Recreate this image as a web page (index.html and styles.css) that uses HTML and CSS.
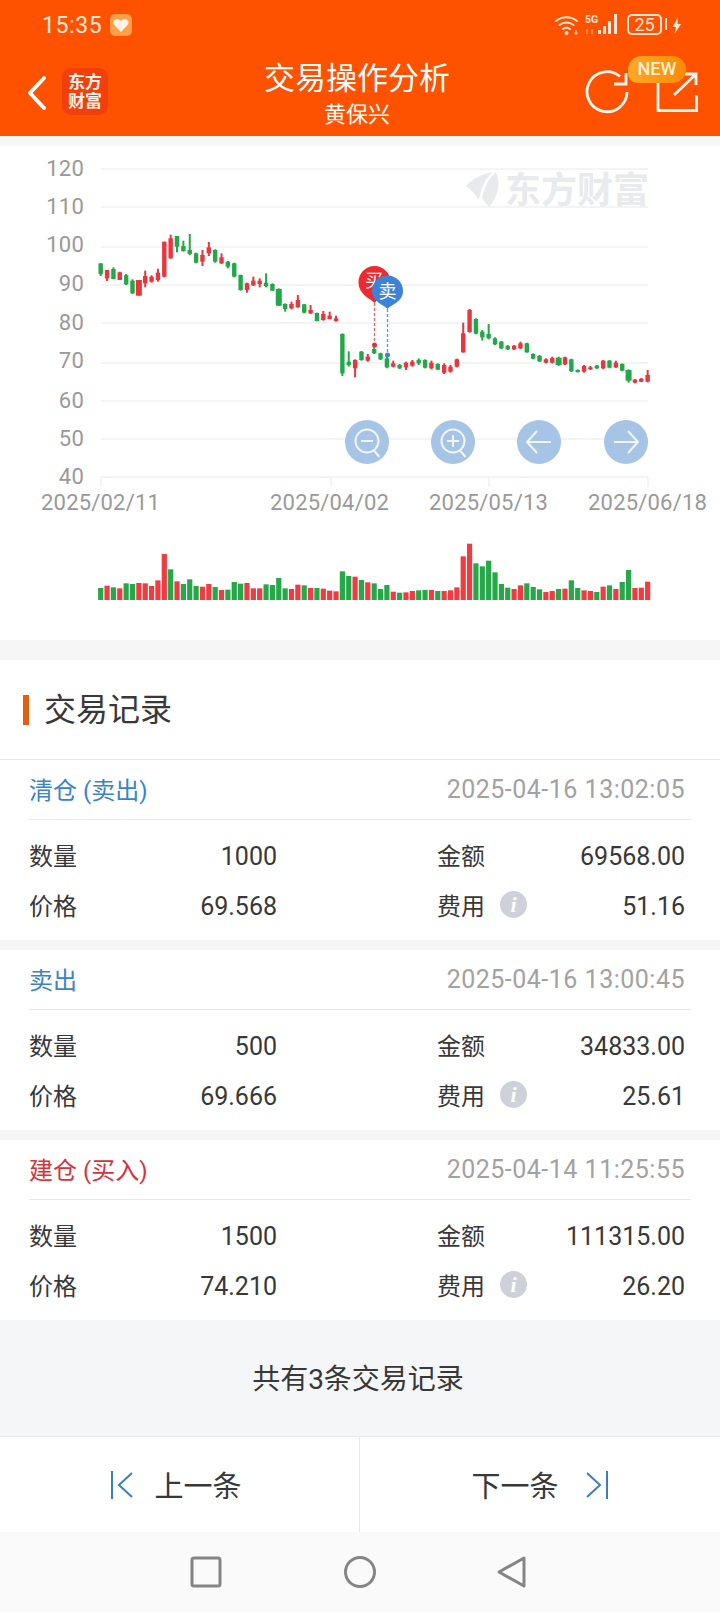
FILE: index.html
```html
<!DOCTYPE html>
<html lang="zh-CN">
  <head>
    <meta charset="UTF-8" />
    <meta name="viewport" content="width=device-width, initial-scale=1.0" />
    <title>交易操作分析</title>
    <link rel="stylesheet" href="styles.css">
  </head>
  <body>
    <header class="top">
      <div class="status">
        <span class="clock">15:35</span>
        <svg class="heart" viewBox="0 0 22 22">
          <rect width="22" height="22" rx="5" fill="#ff9f4a" />
          <path d="M11 18 4 10.500C2.500 7.500 4.500 5 7 5c1.800 0 3 .8 4 2 1-1.200 2.200-2 4-2 2.500 0 4.500 2.500 3 5.500z" fill="#fff4e8" />
        </svg>
        <svg class="status-icons" viewBox="550 10 135 30">
          <g fill="none" stroke="#ffe6d6" stroke-width="2" stroke-linecap="round">
            <path d="M556 21a17 17 0 0 1 21 0" />
            <path d="M559.500 25a11.500 11.500 0 0 1 14 0" />
            <path d="M563 29a6 6 0 0 1 7 0" />
          </g>
          <circle cx="566.500" cy="33" r="2" fill="#ffe6d6" />
          <path d="M574 33h4M576 30v5" stroke="#ffc7a8" stroke-width="1.200" />
          <text class="tiny" x="585" y="22.500">5G</text>
          <path d="M587 29v5M592 29v5" stroke="#ffa06a" stroke-width="1.500" />
          <g fill="#ffe6d6">
            <rect x="598" y="30" width="3" height="4" />
            <rect x="603" y="26" width="3" height="8" />
            <rect x="608" y="21" width="3" height="13" />
            <rect x="614" y="14" width="3" height="20" />
          </g>
          <rect x="628" y="15" width="33" height="19" rx="4" fill="none" stroke="#ffe6d6" stroke-width="2" />
          <text class="batt" x="644.500" y="31">25</text>
          <rect x="665" y="18" width="2" height="12" fill="#ffe6d6" />
          <path d="M678 17 672.500 27h3.500L674.500 34 681 24h-3.500z" fill="#ffe6d6" />
        </svg>
      </div>
      <div class="nav">
        <div class="nav-left">
          <svg class="back" viewBox="0 0 20 36">
            <path d="M17 3 3 18l14 15" fill="none" stroke="#fff" stroke-width="4" stroke-linecap="round" stroke-linejoin="round" />
          </svg>
          <div class="logo">东方<br />财富</div>
        </div>
        <div class="nav-title">
          <h1>交易操作分析</h1>
          <p>黄保兴</p>
        </div>
        <div class="nav-right">
          <svg class="nav-icons" viewBox="580 50 120 86">
            <g fill="none" stroke="#fff8f2" stroke-width="2.800">
              <path d="M627 92a20 20 0 1 1-7-15.500" />
              <path d="M614 84h12V73" />
              <path d="M658 80v30.500h38.500V95.500" />
              <path d="M674 95l22-21M685 74h11v11" />
            </g>
          </svg>
          <span class="badge">NEW</span>
        </div>
      </div>
    </header>

    <section class="chart">
      <svg class="chart-svg" viewBox="0 146 720 494">
        <g class="grid">
          <path d="M101 169H648M101 207H648M101 247H648M101 285H648M101 323H648M101 363H648M101 401H648M101 439H648M101 477H648" />
          <path d="M101 477v10M331 477v10M489 477v10M648 477v10" />
        </g>
        <g class="axis">
          <text x="84" y="176" text-anchor="end">120</text>
          <text x="84" y="214" text-anchor="end">110</text>
          <text x="84" y="252" text-anchor="end">100</text>
          <text x="84" y="291" text-anchor="end">90</text>
          <text x="84" y="330" text-anchor="end">80</text>
          <text x="84" y="368" text-anchor="end">70</text>
          <text x="84" y="408" text-anchor="end">60</text>
          <text x="84" y="446" text-anchor="end">50</text>
          <text x="84" y="484" text-anchor="end">40</text>
          <text x="41" y="510">2025/02/11</text>
          <text x="270" y="510">2025/04/02</text>
          <text x="429" y="510">2025/05/13</text>
          <text x="588" y="510">2025/06/18</text>
        </g>

        <path class="mark-logo" d="M466 186c6-7 16-12 27-14-7 6-12 15-14 28-3-5-7-10-13-14zM496 172c5 11 2 25-7 35-3-4-6-7-7-9 2-10 7-20 14-26z" />
        <text class="mark-text" x="505" y="203">东方财富</text>

        <g id="candles"></g>
        <g id="volume"></g>

        <path class="pin-line red" d="M374.500 303V345" />
        <circle cx="374.500" cy="345" r="2.500" fill="#e5323a" />
        <path class="pin-line blue" d="M387.500 309V355" />
        <circle cx="387.500" cy="355" r="2.500" fill="#3c82d8" />
        <path d="M374.500 303c-3-4-16-8-16-21a16 16 0 0 1 32 0c0 13-13 17-16 21z" fill="#ee2a2e" />
        <text class="pin-text" x="374" y="287">买</text>
        <path d="M387.500 309c-3-4-15.500-7-15.500-18a15.500 15.500 0 0 1 31 0c0 11-12.500 14-15.500 18z" fill="#3c82d8" />
        <text class="pin-text" x="387.500" y="298">卖</text>

        <g class="zoom-btn">
          <circle cx="367" cy="442" r="22" />
          <circle cx="453" cy="442" r="22" />
          <circle cx="539" cy="442" r="22" />
          <circle cx="626" cy="442" r="22" />
        </g>
        <g class="zoom-ico">
          <circle cx="367" cy="441" r="11.500" />
          <path d="M361 441h12M373.500 450l6 7" />
          <circle cx="453" cy="441" r="11.500" />
          <path d="M447 441h12M453 435v12M459.500 450l6 7" />
          <path d="M528 442h23M537 431l-10 11 10 11" />
          <path d="M614 442h23M628 431l10 11-10 11" />
        </g>
      </svg>
    </section>

    <section class="records">
      <h2 class="records-title"><span>交易记录</span></h2>

      <div class="card first">
        <div class="card-head">
          <span class="kind sell">清仓 (卖出)</span>
          <span class="date">2025-04-16 13:02:05</span>
        </div>
        <div class="card-body">
          <div class="cell"><span>数量</span><b>1000</b></div>
          <div class="cell"><span>金额</span><b>69568.00</b></div>
          <div class="cell"><span>价格</span><b>69.568</b></div>
          <div class="cell"><span>费用</span><i class="info">i</i><b>51.16</b></div>
        </div>
      </div>

      <div class="card">
        <div class="card-head">
          <span class="kind sell">卖出</span>
          <span class="date">2025-04-16 13:00:45</span>
        </div>
        <div class="card-body">
          <div class="cell"><span>数量</span><b>500</b></div>
          <div class="cell"><span>金额</span><b>34833.00</b></div>
          <div class="cell"><span>价格</span><b>69.666</b></div>
          <div class="cell"><span>费用</span><i class="info">i</i><b>25.61</b></div>
        </div>
      </div>

      <div class="card">
        <div class="card-head">
          <span class="kind buy">建仓 (买入)</span>
          <span class="date">2025-04-14 11:25:55</span>
        </div>
        <div class="card-body">
          <div class="cell"><span>数量</span><b>1500</b></div>
          <div class="cell"><span>金额</span><b>111315.00</b></div>
          <div class="cell"><span>价格</span><b>74.210</b></div>
          <div class="cell"><span>费用</span><i class="info">i</i><b>26.20</b></div>
        </div>
      </div>
    </section>

    <div class="total">共有3条交易记录</div>

    <div class="pager">
      <a class="page-btn prev">
        <svg class="page-ico" viewBox="0 0 24 30">
          <path d="M2 1v28M22 3 9 15l13 12" />
        </svg>
        <span>上一条</span>
      </a>
      <a class="page-btn next">
        <span>下一条</span>
        <svg class="page-ico" viewBox="0 0 24 30">
          <path d="M22 1v28M2 3l13 12L2 27" />
        </svg>
      </a>
    </div>

    <footer class="sysbar">
      <svg class="sys-ico square" viewBox="0 0 32 32"><rect x="2" y="2" width="28" height="28" rx="2" /></svg>
      <svg class="sys-ico" viewBox="0 0 32 32"><circle cx="16" cy="16" r="14.500" /></svg>
      <svg class="sys-ico" viewBox="0 0 32 32"><path d="M28 2 3 16l25 14z" /></svg>
    </footer>

    <script src="script.js"></script>
  </body>
</html>
```

FILE: styles.css
```css
* {
  box-sizing: border-box;
}

body {
  margin: 0;
  background-color: #f6f6f6;
  font-family: Roboto, "Noto Sans CJK SC", sans-serif;
  color: #383838;
}

.top {
  background-color: #ff5200;
  height: 136px;
  color: #fff;
}

.status {
  display: flex;
  align-items: center;
  height: 50px;
  padding-left: 42px;
}

.clock {
  font-size: 23px;
  letter-spacing: 0.6px;
  color: #ffe9dc;
  width: 68px;
}

.heart {
  width: 22px;
  height: 22px;
}

.status-icons {
  width: 135px;
  height: 30px;
  margin-left: auto;
  margin-right: 35px;
}

.tiny {
  font-size: 10.500px;
  font-weight: 700;
  fill: #ffe6d6;
}

.batt {
  font-size: 18px;
  fill: #ffe6d6;
  text-anchor: middle;
}

.nav {
  display: flex;
  height: 86px;
}

.nav-left {
  display: flex;
  align-items: center;
  gap: 15px;
  width: 217px;
  padding-left: 27px;
}

.back {
  width: 20px;
  height: 36px;
}

.logo {
  width: 46px;
  height: 47px;
  margin-top: -3px;
  padding-top: 5px;
  background-color: #f33f0c;
  border-radius: 9px;
  font-size: 17px;
  font-weight: 700;
  line-height: 19px;
  text-align: center;
  color: #fff2e8;
}

.nav-title {
  width: 280px;
  padding-top: 11px;
  text-align: center;
}

.nav-title h1 {
  margin: 0;
  font-size: 31px;
  font-weight: 400;
  line-height: 36px;
}

.nav-title p {
  margin: 5px 0 0;
  font-size: 22px;
  line-height: 26px;
}

.nav-right {
  position: relative;
  flex: 1;
}

.nav-icons {
  display: block;
  width: 120px;
  height: 86px;
  margin-left: auto;
  margin-right: 20px;
}

.badge {
  position: absolute;
  left: 131px;
  top: 6px;
  width: 58px;
  height: 27px;
  background: linear-gradient(to right, #ffa926, #ff8a05);
  border-radius: 14px 14px 14px 10px;
  font-size: 18px;
  font-weight: 500;
  line-height: 26px;
  text-align: center;
  color: #fff3d6;
}

.chart {
  margin-top: 10px;
  height: 494px;
  background-color: #fff;
}

.chart-svg {
  display: block;
  width: 720px;
  height: 494px;
}

.grid path {
  fill: none;
  stroke: #f4f4f5;
  stroke-width: 2;
}

.axis text {
  font-size: 22px;
  letter-spacing: 0.2px;
  fill: #999;
}

.mark-logo {
  fill: #e9eaee;
}

.mark-text {
  font-size: 36px;
  font-weight: 700;
  fill: #e9eaee;
}

.pin-line {
  fill: none;
  stroke-width: 1.300;
  stroke-dasharray: 3 2;
}

.pin-line.red {
  stroke: #e5606a;
}

.pin-line.blue {
  stroke: #5a94d8;
}

.pin-text {
  font-size: 18px;
  fill: #fff;
  text-anchor: middle;
}

.zoom-btn circle {
  fill: #a6c4e5;
}

.zoom-ico circle,
.zoom-ico path {
  fill: none;
  stroke: #f2f6fb;
  stroke-width: 2;
}

.records {
  margin-top: 20px;
  background-color: #f6f6f6;
}

.records-title {
  height: 99px;
  margin: 0;
  padding: 35px 0 0 23px;
  background-color: #fff;
  font-size: 32px;
  font-weight: 400;
  line-height: 30px;
}

.records-title span {
  display: block;
  padding-left: 15px;
  border-left: 6px solid #e0600f;
}

.card {
  margin-bottom: 10px;
  padding: 0 29px 9px 29px;
  background-color: #fff;
}

.card:last-child {
  margin-bottom: 0;
}

.card.first {
  border-top: 1px solid #e9e9e9;
}

.card-head {
  display: flex;
  align-items: center;
  justify-content: space-between;
  height: 60px;
  padding-right: 6px;
  border-bottom: 1px solid #e9e9e9;
}

.kind {
  margin-bottom: 2px;
  font-size: 24px;
}

.sell {
  color: #3b83c4;
}

.buy {
  color: #d4343c;
}

.date {
  font-size: 25px;
  letter-spacing: 0.5px;
  color: #a2a2a2;
}

.card-body {
  display: grid;
  grid-template-columns: 248px 248px;
  grid-auto-rows: 50px;
  justify-content: space-between;
  padding-top: 11px;
  padding-right: 6px;
}

.cell {
  display: flex;
  align-items: center;
  font-size: 24px;
}

.cell span {
  margin-bottom: 4px;
}

.cell b {
  margin-left: auto;
  font-size: 25px;
  font-weight: 400;
}

.info {
  width: 27px;
  height: 27px;
  margin: 0 0 3px 15px;
  border-radius: 50%;
  background-color: #cdd1d9;
  font-family: "Liberation Serif", serif;
  font-size: 22px;
  font-weight: 700;
  line-height: 27px;
  text-align: center;
  color: #fff;
}

.total {
  height: 117px;
  padding-right: 4px;
  border-bottom: 1px solid #e9e9e9;
  background-color: #f5f6f8;
  font-size: 28px;
  line-height: 120px;
  text-align: center;
}

.pager {
  display: grid;
  grid-template-columns: 1fr 1fr;
  height: 95px;
  background-color: #fff;
}

.page-btn {
  display: flex;
  align-items: center;
  justify-content: center;
  font-size: 29px;
}

.page-btn span {
  margin-bottom: 2px;
}

.prev {
  gap: 20px;
  padding-right: 7px;
  border-right: 1px solid #e9e9e9;
}

.next {
  gap: 26px;
}

.page-ico {
  width: 24px;
  height: 30px;
  fill: none;
  stroke: #3a7ebf;
  stroke-width: 2;
}

.sysbar {
  display: flex;
  justify-content: center;
  align-items: center;
  gap: 120px;
  height: 80px;
  background-color: #fafafa;
}

.sys-ico {
  width: 32px;
  height: 32px;
  fill: none;
  stroke: #858585;
  stroke-width: 3;
  stroke-linejoin: round;
}

.square {
  margin: 0 2.500px 0 -2.500px;
}
```

FILE: script.js
```js
const RED = "#e8363c";
const GREEN = "#22a848";
const START_X = 100.7;
const STEP_X = 6.36;

// y values below are measured at 3x from the top of the chart (page y 150)
const py = (v) => 150 + v / 3;

// colour, wick top, wick bottom, body top, body bottom
const candles = [
  ["g", 340, 378, 340, 372], ["r", 360, 393, 360, 385], ["g", 352, 388, 357, 387], ["r", 365, 390, 367, 390],
  ["g", 372, 405, 376, 403], ["g", 388, 432, 392, 430], ["r", 390, 437, 390, 437], ["r", 362, 412, 378, 400],
  ["r", 376, 398, 380, 395], ["r", 356, 395, 368, 390], ["r", 275, 382, 275, 380], ["r", 254, 326, 265, 325],
  ["g", 258, 307, 258, 290], ["g", 272, 305, 288, 303], ["g", 252, 315, 300, 312], ["g", 308, 340, 310, 338],
  ["r", 300, 348, 315, 335], ["r", 276, 318, 292, 310], ["g", 298, 338, 300, 335], ["r", 310, 342, 322, 340],
  ["g", 333, 355, 335, 350], ["g", 338, 382, 340, 380], ["g", 374, 422, 375, 420], ["r", 398, 428, 400, 420],
  ["r", 380, 408, 392, 406], ["r", 385, 412, 392, 402], ["g", 370, 412, 398, 408], ["g", 400, 423, 402, 422],
  ["g", 415, 468, 417, 467], ["g", 460, 485, 462, 477], ["r", 455, 478, 462, 475], ["r", 435, 473, 450, 472],
  ["g", 462, 490, 463, 488], ["r", 465, 492, 480, 490], ["g", 488, 514, 489, 513], ["r", 483, 512, 492, 510],
  ["r", 485, 508, 497, 507], ["r", 497, 515, 505, 513], ["g", 550, 678, 552, 670], ["g", 604, 650, 635, 645],
  ["r", 628, 682, 630, 655], ["g", 603, 632, 605, 630], ["r", 612, 635, 620, 632], ["g", 590, 612, 597, 610],
  ["g", 608, 630, 610, 628], ["g", 615, 655, 625, 652], ["r", 632, 652, 640, 650], ["g", 642, 657, 645, 655],
  ["r", 635, 660, 638, 652], ["r", 630, 650, 635, 647], ["g", 625, 645, 630, 640], ["g", 628, 655, 630, 653],
  ["r", 632, 658, 638, 655], ["g", 640, 660, 642, 659], ["r", 640, 672, 645, 668], ["r", 645, 668, 650, 665],
  ["r", 626, 652, 628, 650], ["r", 518, 608, 550, 607], ["r", 477, 548, 480, 546], ["g", 505, 553, 507, 551],
  ["g", 540, 572, 545, 562], ["g", 522, 568, 552, 565], ["g", 562, 585, 565, 583], ["g", 573, 597, 575, 595],
  ["g", 585, 600, 588, 598], ["r", 585, 600, 587, 598], ["r", 575, 597, 580, 595], ["g", 578, 608, 580, 607],
  ["g", 610, 628, 612, 626], ["g", 615, 636, 618, 634], ["r", 625, 640, 628, 638], ["r", 620, 640, 624, 638],
  ["g", 620, 648, 623, 645], ["r", 620, 645, 622, 643], ["g", 626, 666, 628, 664], ["g", 658, 668, 660, 666],
  ["r", 645, 668, 648, 665], ["r", 648, 660, 652, 658], ["g", 645, 657, 647, 655], ["r", 630, 657, 632, 655],
  ["g", 630, 655, 632, 653], ["r", 632, 654, 638, 652], ["g", 640, 664, 642, 662], ["g", 658, 698, 660, 692],
  ["r", 687, 700, 689, 698], ["r", 684, 696, 686, 695], ["r", 660, 697, 675, 695],
];

const wideBodies = [6, 28, 72, 83];

// tops at 3x from page y 530, the bars all stand on page y 600
const volumeTops = [
  174, 167, 172, 175, 160, 162, 159, 160, 168, 151, 72, 118, 154, 162, 148, 168, 170, 162, 171, 180, 179, 156,
  161, 159, 175, 175, 163, 165, 144, 175, 177, 164, 166, 174, 174, 176, 182, 184, 124, 138, 140, 150, 157, 160,
  177, 165, 185, 188, 187, 183, 181, 180, 180, 183, 183, 181, 172, 79, 41, 100, 109, 92, 127, 162, 173, 177,
  166, 160, 171, 178, 186, 183, 177, 176, 151, 174, 181, 183, 186, 170, 166, 177, 156, 120, 174, 173, 155,
];
const volumeColours =
  "grgrggrrrrrgrgggrrgrgggrrrggggrrgrgrrrggrgrg" + "ggrgrrggrgrrrrrggggggrrgggrrgrggrrgrgrggrrr";

let candleSvg = "";
candles.forEach((c, i) => {
  const x = START_X + i * STEP_X;
  const colour = c[0] === "r" ? RED : GREEN;
  const width = wideBodies.includes(i) ? 6 : 4.4;
  const top = py(c[3]);
  const height = Math.max(py(c[4]) - top, 2);
  candleSvg += `<rect x="${x - 1}" y="${py(c[1])}" width="2" height="${(c[2] - c[1]) / 3}" fill="${colour}" />`;
  candleSvg += `<rect x="${x - width / 2}" y="${top}" width="${width}" height="${height}" fill="${colour}" />`;
});
document.getElementById("candles").innerHTML = candleSvg;

let volumeSvg = "";
volumeTops.forEach((t, i) => {
  const x = START_X + i * STEP_X;
  const colour = volumeColours[i] === "r" ? "#ee3c40" : "#25a848";
  const top = 530 + t / 3;
  volumeSvg += `<rect x="${x - 2.6}" y="${top}" width="5.2" height="${600 - top}" fill="${colour}" />`;
});
document.getElementById("volume").innerHTML = volumeSvg;
```
